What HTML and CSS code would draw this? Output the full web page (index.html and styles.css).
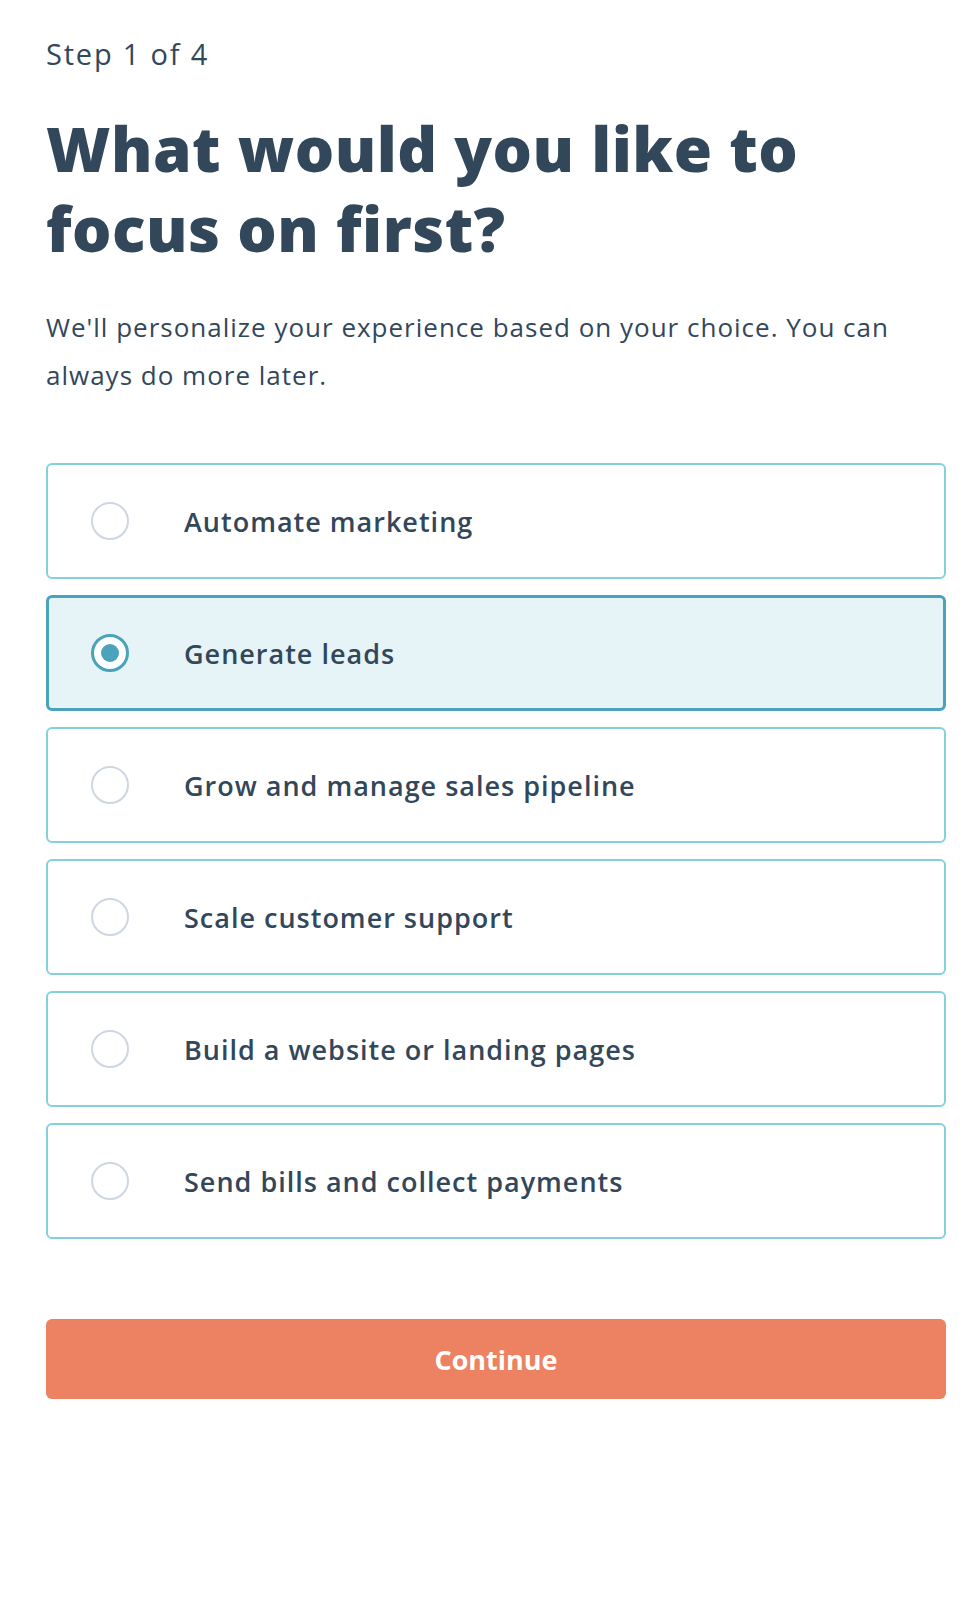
FILE: index.html
```html
<!DOCTYPE html>
<html lang="en">
<head>
<meta charset="utf-8">
<title>Step 1 of 4</title>
<link rel="stylesheet" href="styles.css">
</head>
<body>
<main class="page">
  <p class="step">Step 1 of 4</p>
  <h1 class="title">What would you like to focus on first?</h1>
  <p class="lead">We'll personalize your experience based on your choice. You can always do more later.</p>
  <div class="options">
    <label class="option"><span class="radio"></span><span class="option-text">Automate marketing</span></label>
    <label class="option selected"><span class="radio"></span><span class="option-text">Generate leads</span></label>
    <label class="option"><span class="radio"></span><span class="option-text">Grow and manage sales pipeline</span></label>
    <label class="option"><span class="radio"></span><span class="option-text">Scale customer support</span></label>
    <label class="option"><span class="radio"></span><span class="option-text">Build a website or landing pages</span></label>
    <label class="option"><span class="radio"></span><span class="option-text">Send bills and collect payments</span></label>
  </div>
  <button class="continue" type="button">Continue</button>
</main>
</body>
</html>
```
FILE: styles.css
```css
* { box-sizing: border-box; }
html, body { margin: 0; padding: 0; background: #fff; }
body {
  font-family: "Open Sans", "Lato", sans-serif;
  color: #33475b;
}
.page {
  width: 900px;
  margin-left: 46px;
  padding-top: 36px;
}
.step {
  margin: 0;
  font-size: 29px;
  line-height: 36px;
  font-weight: 400;
  letter-spacing: 1.8px;
}
.title {
  margin: 36px 0 0;
  font-size: 62px;
  line-height: 80px;
  font-weight: 800;
  letter-spacing: 0.5px;
}
.lead {
  margin: 35px 0 0;
  font-size: 26px;
  line-height: 48px;
  font-weight: 400;
  letter-spacing: 1px;
}
.options {
  margin-top: 64px;
  display: flex;
  flex-direction: column;
  gap: 16px;
}
.option {
  height: 116px;
  border: 2px solid #86d0dd;
  border-radius: 6px;
  background: #fff;
  display: flex;
  align-items: center;
  padding-left: 43px;
}
.option.selected {
  border: 3px solid #4aa3bb;
  background: #e6f4f8;
  padding-left: 42px;
}
.radio {
  width: 38px;
  height: 38px;
  border-radius: 50%;
  border: 2px solid #cdd6e2;
  background: #fff;
  flex: none;
  display: flex;
  align-items: center;
  justify-content: center;
}
.selected .radio {
  border: 3px solid #4aa3bb;
}
.selected .radio::after {
  content: "";
  width: 18px;
  height: 18px;
  border-radius: 50%;
  background: #4aa3bb;
}
.option-text {
  margin-left: 55px;
  font-size: 27px;
  font-weight: 600;
  letter-spacing: 1px;
}
.continue {
  display: block;
  width: 100%;
  height: 80px;
  margin-top: 80px;
  border: 0;
  border-radius: 6px;
  background: #ed8262;
  color: #fff;
  font-family: "Open Sans", "Lato", sans-serif;
  font-size: 27px;
  font-weight: 700;
}
```
